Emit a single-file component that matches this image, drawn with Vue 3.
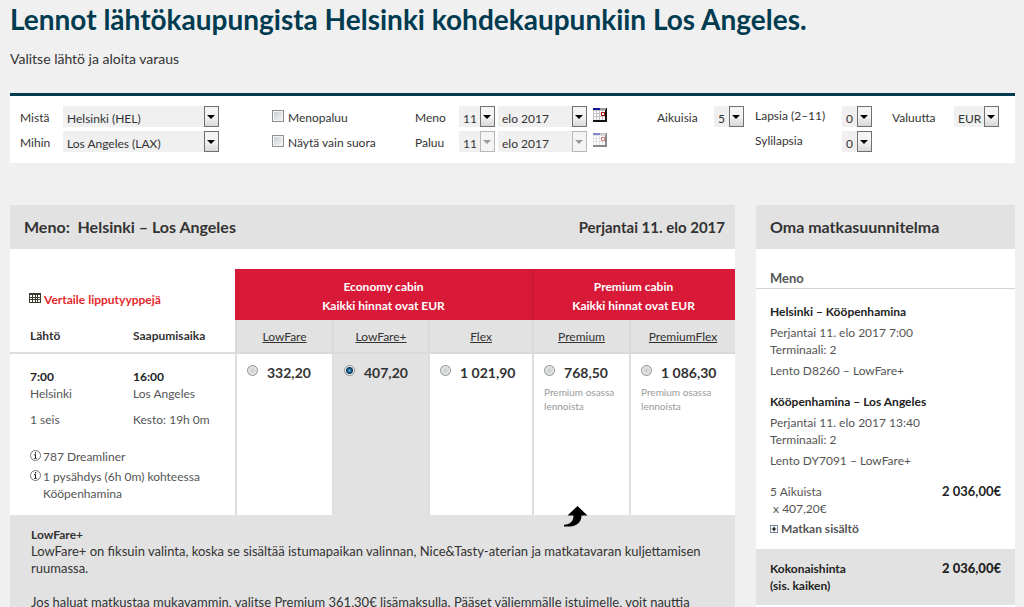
<script setup>
import { ref } from 'vue'

const fares = [
  { name: 'LowFare', price: '332,20' },
  { name: 'LowFare+', price: '407,20' },
  { name: 'Flex', price: '1 021,90' },
  { name: 'Premium', price: '768,50', note: 'Premium osassa lennoista' },
  { name: 'PremiumFlex', price: '1 086,30', note: 'Premium osassa lennoista' }
]
const selected = ref('LowFare+')
const legs = [
  { route: 'Helsinki – Kööpenhamina', date: 'Perjantai 11. elo 2017 7:00', terminal: 'Terminaali: 2', flight: 'Lento D8260 – LowFare+' },
  { route: 'Kööpenhamina – Los Angeles', date: 'Perjantai 11. elo 2017 13:40', terminal: 'Terminaali: 2', flight: 'Lento DY7091 – LowFare+' }
]
</script>

<template>
  <div class="page">
    <h1>Lennot lähtökaupungista Helsinki kohdekaupunkiin Los Angeles.</h1>
    <p class="lead">Valitse lähtö ja aloita varaus</p>

    <form class="search">
      <div class="group">
        <div class="line">
          <label class="w-place" for="from">Mistä</label>
          <span class="select grow"><select id="from"><option>Helsinki (HEL)</option></select></span>
        </div>
        <div class="line">
          <label class="w-place" for="to">Mihin</label>
          <span class="select grow"><select id="to"><option>Los Angeles (LAX)</option></select></span>
        </div>
      </div>
      <div class="group">
        <div class="line tick"><input id="return" type="checkbox"><label for="return">Menopaluu</label></div>
        <div class="line tick"><input id="direct" type="checkbox"><label for="direct">Näytä vain suora</label></div>
      </div>
      <div class="group">
        <div v-for="(d, i) in ['Meno', 'Paluu']" :key="d" class="line" :class="{ off: i === 1 }">
          <label class="w-date" :for="'day' + i">{{ d }}</label>
          <span class="select day"><select :id="'day' + i"><option>11</option></select></span>
          <span class="select month"><select :aria-label="d"><option>elo 2017</option></select></span>
          <button type="button" class="cal" :aria-label="d">
            <svg width="14" height="14" viewBox="0 0 14 14">
              <rect width="14" height="14" fill="#111" />
              <rect y="3" width="12" height="9" fill="#fff" />
              <rect width="7" height="2" fill="#1414a0" />
              <rect x="7" width="6" height="2" fill="#999" />
              <path d="M0 2.5H12M0 5.5H12M0 8.5H12M.5 3V12M3.5 3V12M6.5 3V12M9.5 3V12" stroke="#c4c4c4" fill="none" />
              <rect x="8.5" y="4.5" width="3" height="3" fill="#fff" stroke="#b01818" />
            </svg>
          </button>
        </div>
      </div>
      <div class="group">
        <div class="line">
          <label class="w-adult" for="adults">Aikuisia</label>
          <span class="select num"><select id="adults"><option>5</option></select></span>
        </div>
      </div>
      <div class="group">
        <div class="line up">
          <label class="w-child" for="children">Lapsia (2–11)</label>
          <span class="select num"><select id="children"><option>0</option></select></span>
        </div>
        <div class="line up">
          <label class="w-child" for="infants">Sylilapsia</label>
          <span class="select num"><select id="infants"><option>0</option></select></span>
        </div>
      </div>
      <div class="group">
        <div class="line">
          <label class="w-cur" for="currency">Valuutta</label>
          <span class="select cur"><select id="currency"><option>EUR</option></select></span>
        </div>
      </div>
    </form>

    <div class="columns">
      <main>
        <h2 class="bar"><span>Meno:&nbsp; Helsinki – Los Angeles</span><span class="date">Perjantai 11. elo 2017</span></h2>
        <table>
          <colgroup>
            <col class="c-dep"><col class="c-arr"><col class="c-f1"><col class="c-f2"><col class="c-f3"><col class="c-f4"><col class="c-f5">
          </colgroup>
          <thead>
            <tr class="cabins">
              <td colspan="2">
                <a href="#" class="compare">
                  <svg width="12" height="10" viewBox="0 0 12 10">
                    <rect width="12" height="10" fill="#3c3c30" />
                    <path d="M1 2h2v2H1zM4 2h2v2H4zM7 2h1v2H7zM9 2h2v2H9zM1 5h2v1H1zM4 5h2v1H4zM7 5h1v1H7zM9 5h2v1H9zM1 7h2v2H1zM4 7h2v2H4zM7 7h1v2H7zM9 7h2v2H9z" fill="#fff" />
                  </svg>Vertaile lipputyyppejä</a>
              </td>
              <th colspan="3">Economy cabin<br>Kaikki hinnat ovat EUR</th>
              <th colspan="2">Premium cabin<br>Kaikki hinnat ovat EUR</th>
            </tr>
            <tr class="names">
              <th class="city">Lähtö</th>
              <th class="city second">Saapumisaika</th>
              <th v-for="f in fares" :key="f.name" class="name"><a href="#">{{ f.name }}</a></th>
            </tr>
          </thead>
          <tbody>
            <tr class="times">
              <td class="stop"><b>7:00</b><br>Helsinki<p>1 seis</p></td>
              <td class="stop second"><b>16:00</b><br>Los Angeles<p>Kesto: 19h 0m</p></td>
              <td v-for="f in fares" :key="f.name" rowspan="2" class="fare" :class="{ on: selected === f.name }">
                <label><input v-model="selected" type="radio" name="fare" :value="f.name"><span>{{ f.price }}</span></label>
                <p v-if="f.note">{{ f.note }}</p>
                <svg v-if="f.name === 'Premium'" class="hook" width="24" height="22" viewBox="0 0 24 22">
                  <path d="M13.500 0L23.500 9.500H17.500C17.500 16 13 20 6 20.500H0V18.800C6 18.500 9.500 15.500 9.500 9.500H3.500Z" fill="#000" />
                </svg>
              </td>
            </tr>
            <tr>
              <td colspan="2" class="info">
                <div v-for="t in ['787 Dreamliner', '1 pysähdys (6h 0m) kohteessa Kööpenhamina']" :key="t">
                  <svg width="11" height="11" viewBox="0 0 11 11">
                    <circle cx="5.500" cy="5.500" r="5" fill="#fff" stroke="#666" stroke-width=".9" />
                    <path d="M5 2h1v1.400H5zM4 4.300h2V8H7v.8H4V8h1V5.200H4z" fill="#222" />
                  </svg>
                  <span>{{ t }}</span>
                </div>
              </td>
            </tr>
          </tbody>
        </table>
        <section class="details">
          <b>LowFare+</b>
          <p>LowFare+ on fiksuin valinta, koska se sisältää istumapaikan valinnan, Nice&amp;Tasty-aterian ja matkatavaran kuljettamisen ruumassa.</p>
          <p>Jos haluat matkustaa mukavammin, valitse Premium 361,30€ lisämaksulla. Pääset väljemmälle istuimelle, voit nauttia</p>
        </section>
      </main>

      <aside>
        <h2 class="bar">Oma matkasuunnitelma</h2>
        <h3>Meno</h3>
        <div class="plan">
          <div v-for="l in legs" :key="l.route" class="leg">
            <b>{{ l.route }}</b>
            <p>{{ l.date }}<br>{{ l.terminal }}</p>
            <p>{{ l.flight }}</p>
          </div>
          <div class="cost"><span>5 Aikuista<br>&nbsp;x 407,20€</span><b>2 036,00€</b></div>
          <button type="button" class="more">
            <svg width="8" height="8" viewBox="0 0 8 8">
              <rect x=".5" y=".5" width="7" height="7" fill="#fff" stroke="#7c8ba8" />
              <path d="M4 1.800V6.200M1.800 4H6.200" stroke="#000" stroke-width="1.200" />
            </svg>Matkan sisältö
          </button>
        </div>
        <div class="total"><span>Kokonaishinta<br>(sis. kaiken)</span><b>2 036,00€</b></div>
      </aside>
    </div>
  </div>
</template>

<style>
body { background: #f0f0f0; }
</style>

<style scoped>
.page {
  box-sizing: border-box;
  height: 100vh;
  overflow: hidden;
  padding: 0 9px 0 10px;
  background: #f0f0f0;
  color: #333;
  font: 12px/17px Lato, "Liberation Sans", sans-serif;
}
h1, h2, h3, p { margin: 0; }
h1 { color: #003b50; font-size: 28px; line-height: 38px; white-space: nowrap; }
.lead { margin: 12px 0 25px; font-size: 14px; line-height: 18px; }

.search {
  display: grid;
  grid-template-columns: 252fr 143fr 242fr 98fr 137fr 107fr;
  padding: 10px 16px 11px 10px;
  border-top: 3px solid #003b50;
  background: #fff;
}
.group { display: flex; flex-direction: column; gap: 4px; }
.line { display: flex; height: 21px; line-height: 23px; white-space: nowrap; }
.line label { flex: none; }
.line.up label { line-height: 19px; }
.w-place { width: 43px; }
.w-date { width: 44px; }
.w-adult { width: 57px; }
.w-child { width: 87px; }
.w-cur { width: 62px; }
.select { position: relative; flex: none; height: 21px; background: #f0f0f0; }
.select.grow { width: 156px; }
.select.day { width: 36px; margin-right: 3px; }
.select.month { width: 89px; margin-right: 6px; }
.select.num { width: 30px; }
.select.cur { width: 45px; }
.select select {
  display: block;
  width: 100%;
  height: 21px;
  padding: 1px 15px 0 4px;
  border: 0;
  border-radius: 0;
  appearance: none;
  background: none;
  color: #333;
  font: inherit;
}
.select::before {
  content: "";
  position: absolute;
  top: 0;
  right: 0;
  box-sizing: border-box;
  width: 15px;
  height: 21px;
  border: 1px solid #707070;
  background: linear-gradient(#f4f4f4 50%, #d8d8d8);
  pointer-events: none;
}
.select::after {
  content: "";
  position: absolute;
  top: 9px;
  right: 4px;
  border: solid transparent;
  border-width: 4px 4px 0;
  border-top-color: #000;
  pointer-events: none;
}
.off .select::before { border-color: #b4b9bc; background: #f4f4f4; }
.off .select::after { border-top-color: #999; }
.cal { display: flex; padding: 2px 0 0; border: 0; background: none; }
.off .cal { opacity: .5; }
.tick input {
  appearance: none;
  box-sizing: border-box;
  width: 12px;
  height: 12px;
  margin: 4px 4px 0 0;
  border: 1px solid #8e8f8f;
  background: linear-gradient(135deg, #c8ccd0, #f6f6f6);
  box-shadow: inset 0 0 0 1px #f4f4f4;
}

.columns { display: grid; grid-template-columns: 725fr 259fr; gap: 21px; margin-top: 42px; }
.bar {
  display: flex;
  justify-content: space-between;
  padding: 0 10px 0 14px;
  background: #e2e2e2;
  font-size: 16px;
  line-height: 44px;
}
.date { font-size: 15px; }
main, aside { background: #fff; }
table { width: 100%; margin-top: 20px; border-collapse: separate; border-spacing: 0; table-layout: fixed; }
td, th { padding: 0; text-align: left; vertical-align: top; }
.c-dep { width: 123px; }
.c-arr { width: 102px; }
.c-f1, .c-f4 { width: 97px; }
.c-f2 { width: 96px; }
.c-f3 { width: 104px; }
.c-f5 { width: 106px; }
.cabins th {
  height: 43px;
  padding-top: 8px;
  background: #d91938;
  color: #fff;
  line-height: 19px;
  text-align: center;
}
.cabins th + th { box-shadow: inset 1px 0 #c01733; }
.compare { display: flex; gap: 3px; padding: 22px 0 0 19px; color: #e4282c; font-weight: bold; text-decoration: none; }
.compare svg { margin-top: 2px; }
.names th { border-bottom: 2px solid #dedede; line-height: 32px; }
.names .city { padding-left: 20px; }
.names .second, .stop.second { padding-left: 0; }
.names .name { padding-top: 2px; border-bottom-color: #dadada; border-left: 2px solid #d9d9d9; background: #e2e2e2; font-weight: normal; line-height: 30px; text-align: center; }
.name a { color: #333; }
.stop { height: 80px; padding: 14px 0 0 20px; color: #555; }
.stop b { color: #222; }
.stop p { margin-top: 9px; }
.info { height: 67px; padding: 0 0 0 20px; color: #555; }
.info div { display: flex; gap: 2px; margin-bottom: 3px; line-height: 17px; }
.info svg { flex: none; margin-top: 2px; }
.info span { width: 170px; }
.fare { position: relative; border-left: 2px solid #dedede; }
.fare.on { background: #e2e2e2; }
.fare label { display: flex; align-items: flex-start; gap: 9px; padding: 10px 0 0 10px; font-size: 14px; font-weight: bold; line-height: 18px; white-space: nowrap; }
.fare input {
  appearance: none;
  box-sizing: border-box;
  width: 11px;
  height: 11px;
  margin: 1px 0 0;
  border: 1px solid #8e8f8f;
  border-radius: 50%;
  background: radial-gradient(#c9cccf, #f2f2f2);
}
.fare input:checked { background: radial-gradient(circle at center, #5fb8e0 0, #175a8a 2px, #0c2f50 3px, #f2f2f2 4px); }
.fare p { padding: 3px 10px 0; color: #999; font-size: 10px; line-height: 14px; }
.hook { position: absolute; z-index: 1; bottom: -13px; left: 30px; }
.details { height: 160px; padding: 11px 34px 0 21px; background: #e2e2e2; font-size: 13px; }
.details b { font-size: 12px; }
.details p + p { margin-top: 17px; }

aside h3 { padding: 21px 14px 1px; border-bottom: 1px solid #d4d4d4; color: #555; font-size: 13px; line-height: 17px; }
.plan { padding: 14px 14px 12px; color: #555; }
.plan b, .total { color: #222; }
.leg { margin-bottom: 14px; }
.leg p { margin-top: 4px; }
.cost, .total { display: flex; justify-content: space-between; }
.cost b, .total b { font-size: 13px; }
.more { display: flex; align-items: center; gap: 3px; margin-top: 3px; padding: 0; border: 0; background: none; color: #555; font: bold 12px/17px Lato, sans-serif; }
.total { padding: 11px 14px; background: #e2e2e2; font-weight: bold; }
</style>
